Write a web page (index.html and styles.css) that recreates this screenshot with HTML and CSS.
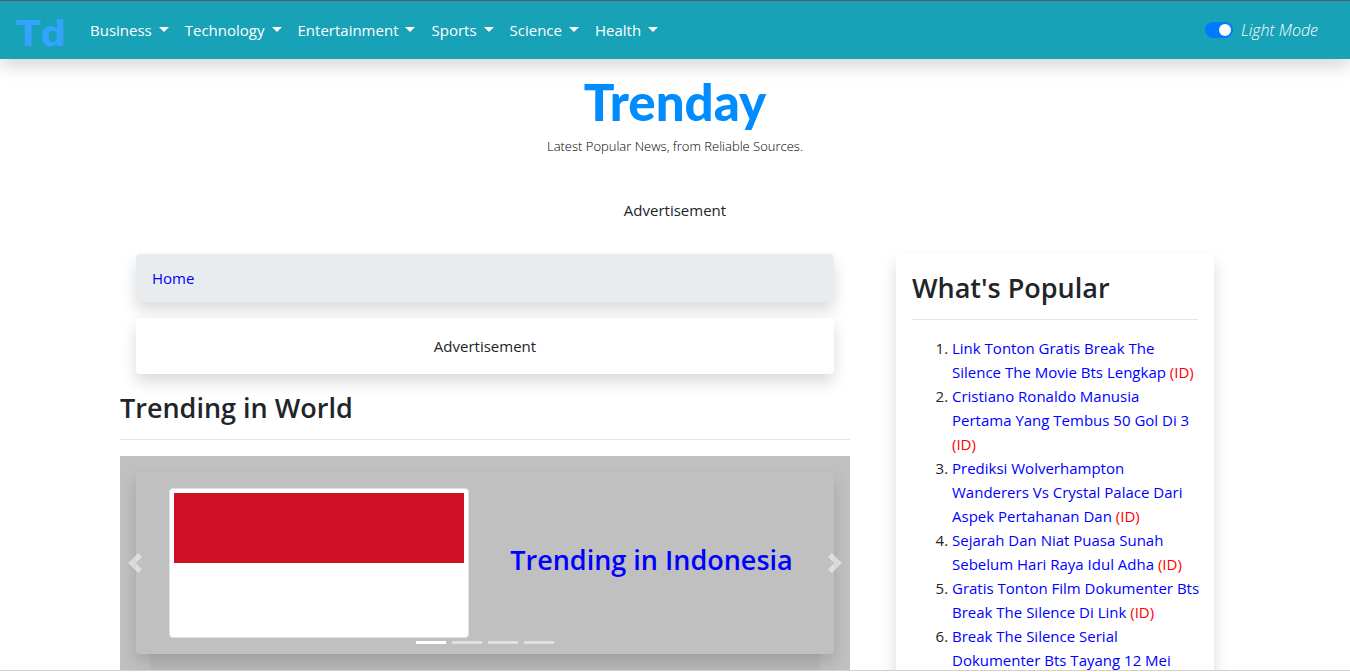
FILE: index.html
```html
<!DOCTYPE html>
<html lang="en">
<head>
<meta charset="utf-8">
<title>Trenday</title>
<link rel="stylesheet" href="styles.css">
</head>
<body>
<nav class="navbar">
  <a class="brand" href="#">Td</a>
  <ul class="menu">
    <li><button type="button">Business</button></li>
    <li><button type="button">Technology</button></li>
    <li><button type="button">Entertainment</button></li>
    <li><button type="button">Sports</button></li>
    <li><button type="button">Science</button></li>
    <li><button type="button">Health</button></li>
  </ul>
  <label class="mode"><input class="switch" type="checkbox" checked><span>Light Mode</span></label>
</nav>
<header class="masthead">
  <a class="wordmark" href="#">Trenday</a>
  <p class="tagline">Latest Popular News, from Reliable Sources.</p>
</header>
<p class="ad-top">Advertisement</p>
<div class="container">
  <main class="main">
    <nav class="card crumbs"><a href="#">Home</a></nav>
    <div class="card ad">Advertisement</div>
    <h1 class="title">Trending in World</h1>
    <section class="carousel" aria-label="Trending">
      <div class="slide">
        <div class="flag"><div class="flag-red"></div></div>
        <h2 class="slide-title"><a href="#">Trending in Indonesia</a></h2>
      </div>
      <button class="arrow prev" type="button" aria-label="Previous"><svg width="20" height="20" viewBox="0 0 8 8" fill="#fff"><path d="M5.25 0l-4 4 4 4 1.5-1.5L4.25 4l2.5-2.5L5.25 0z"/></svg></button>
      <button class="arrow next" type="button" aria-label="Next"><svg width="20" height="20" viewBox="0 0 8 8" fill="#fff"><path d="M2.75 0l-1.5 1.5L3.75 4l-2.5 2.5L2.75 8l4-4-4-4z"/></svg></button>
      <div class="dots"><button class="on" type="button" aria-label="Slide 1"></button><button type="button" aria-label="Slide 2"></button><button type="button" aria-label="Slide 3"></button><button type="button" aria-label="Slide 4"></button></div>
    </section>
  </main>
  <aside class="side">
    <div class="card popular">
      <h2 class="title">What's Popular</h2>
      <ol>
        <li><a href="#">Link Tonton Gratis Break The Silence The Movie Bts Lengkap</a> <span>(ID)</span></li>
        <li><a href="#">Cristiano Ronaldo Manusia Pertama Yang Tembus 50 Gol Di 3</a> <span>(ID)</span></li>
        <li><a href="#">Prediksi Wolverhampton Wanderers Vs Crystal Palace Dari Aspek Pertahanan Dan</a> <span>(ID)</span></li>
        <li><a href="#">Sejarah Dan Niat Puasa Sunah Sebelum Hari Raya Idul Adha</a> <span>(ID)</span></li>
        <li><a href="#">Gratis Tonton Film Dokumenter Bts Break The Silence Di Link</a> <span>(ID)</span></li>
        <li><a href="#">Break The Silence Serial Dokumenter Bts Tayang 12 Mei</a></li>
      </ol>
    </div>
  </aside>
</div>
</body>
</html>
```
FILE: styles.css
```css
* { box-sizing: border-box; }
body {
  margin: 0;
  height: 100vh;
  overflow: hidden;
  border-top: 1px solid #5a5a5a;
  background: #fff;
  color: #212529;
  font: 400 15px/24px "Open Sans", "Noto Sans", sans-serif;
}
body::after {
  content: "";
  position: fixed;
  inset: auto 0 0;
  height: 1px;
  background: #d4d0c8;
  border-bottom: 1px solid #fff;
}
a { color: #00f; text-decoration: none; }
button { font: inherit; color: inherit; border: 0; padding: 0; background: none; }
h1, h2, p, ul, ol { margin: 0; padding: 0; }

.navbar {
  display: flex;
  align-items: center;
  height: 58px;
  padding: 0 32px 0 16px;
  background: #17a2b8;
  color: #fff;
  box-shadow: 0 8px 16px rgba(0, 0, 0, .15);
}
.brand {
  width: 66px;
  padding-top: 8px;
  color: #33a3ff;
  font: 700 36px/40px "DejaVu Sans", sans-serif;
}
.menu { display: flex; flex: 1; list-style: none; }
.menu button { padding: 8px; }
.menu button::after {
  content: "";
  display: inline-block;
  margin-left: 7px;
  vertical-align: 4px;
  border: 5px solid transparent;
  border-top-color: #fff;
  border-bottom: 0;
}
.mode { display: flex; align-items: center; gap: 8px; font-size: 16px; font-weight: 300; font-style: italic; }
.switch {
  appearance: none;
  width: 28px;
  height: 16px;
  margin: 0;
  padding: 2px;
  border-radius: 8px;
  background: #007bff;
}
.switch::after {
  content: "";
  display: block;
  width: 12px;
  height: 12px;
  margin-left: auto;
  border-radius: 50%;
  background: #fff;
}

.masthead { padding-top: 13px; text-align: center; }
.wordmark {
  display: block;
  padding-bottom: 2px;
  color: #008cff;
  font: 900 51px/60px Lato, sans-serif;
}
.tagline { color: #000; font-size: 13px; font-weight: 300; }
.ad-top { padding: 40px 0 32px; text-align: center; }

.container {
  display: grid;
  grid-template-columns: 2fr 1fr;
  max-width: 1140px;
  margin: 0 auto;
}
.main, .side { padding: 0 15px; }
.card { margin: 0 16px 16px; border-radius: 4px; box-shadow: 0 8px 16px rgba(0, 0, 0, .15); }
.crumbs { padding: 12px 16px; background: #e9ecef; }
.ad { padding: 16px; background: #fff; text-align: center; }
.title {
  margin-bottom: 16px;
  padding-bottom: 13px;
  border-bottom: 1px solid #e5e5e5;
  font-size: 27px;
  font-weight: 600;
  line-height: 36px;
}

.carousel { position: relative; padding: 16px; background: #c0c0c0; height: 260px; }
.carousel::before {
  content: "";
  position: absolute;
  inset: 180px 30px 0;
  background: rgba(0, 0, 0, .03);
}
.slide {
  position: relative;
  display: grid;
  grid-template-columns: 300px 1fr;
  gap: 16px;
  align-items: center;
  padding: 16px 16px 16px 33px;
  border-radius: 4px;
  background: #c0c0c0;
  box-shadow: 0 8px 16px rgba(0, 0, 0, .15);
}
.flag { height: 150px; padding: 4px; border: 1px solid #dee2e6; border-radius: 4px; background: #fff; }
.flag-red { height: 70px; background: #ce1126; }
.slide-title { padding-bottom: 6px; text-align: center; font-size: 27px; font-weight: 600; line-height: 36px; }
.arrow { position: absolute; top: 97px; height: 20px; opacity: .5; }
.arrow svg { display: block; }
.prev { left: 5px; }
.next { right: 5px; }
.dots { position: absolute; top: 185px; left: 0; right: 0; display: flex; justify-content: center; gap: 6px; }
.dots button { width: 30px; height: 3px; background: #fff; opacity: .5; }
.dots .on { opacity: 1; }

.popular { padding: 16px; background: #fff; }
.popular ol { margin-right: -2px; padding-left: 40px; }
.popular span { color: #f00; }
```
